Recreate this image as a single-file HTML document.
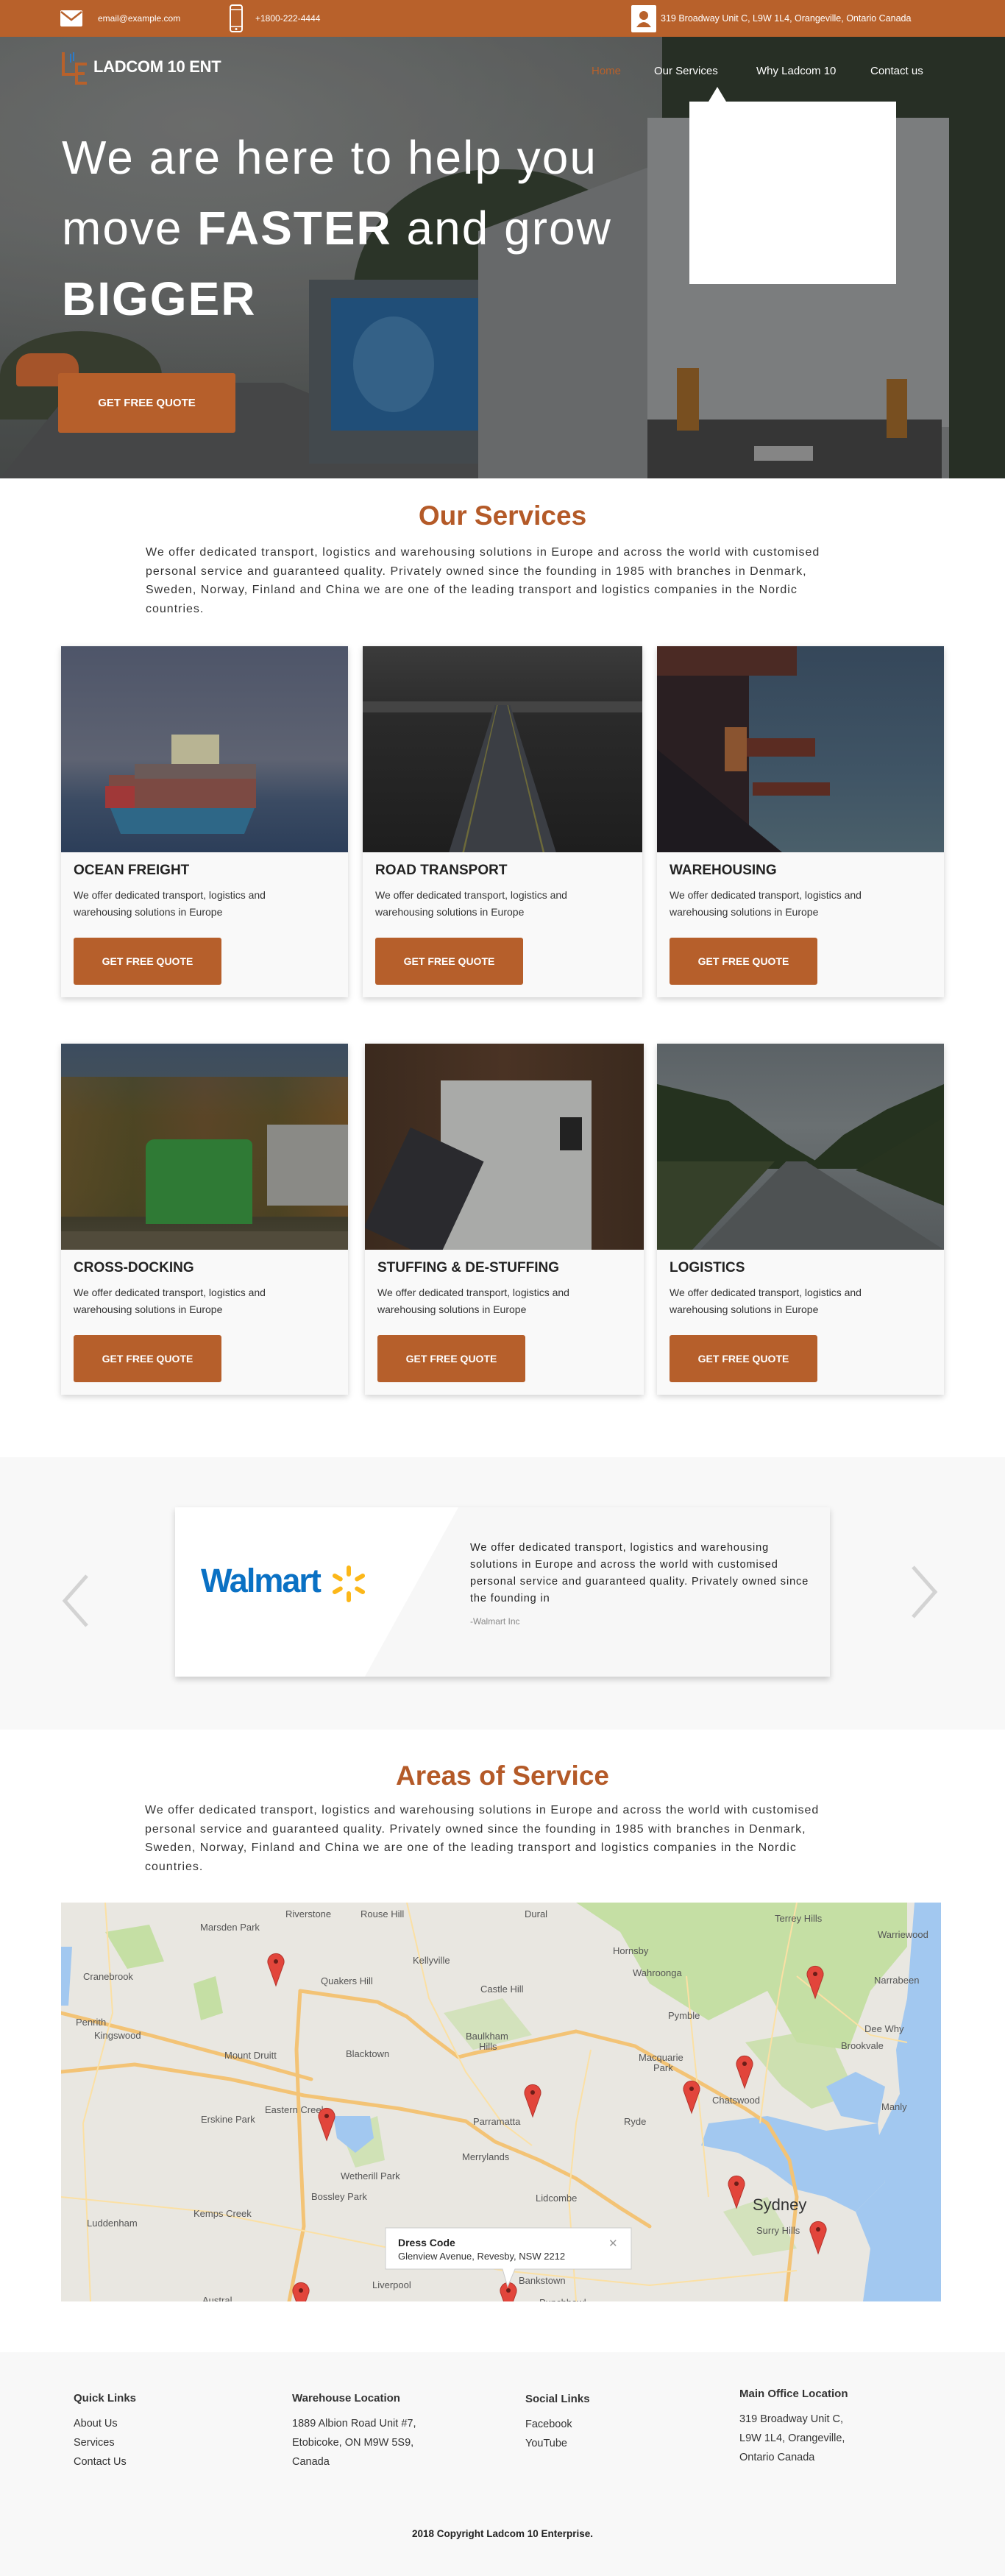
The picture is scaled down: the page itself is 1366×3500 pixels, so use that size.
<!DOCTYPE html>
<html><head><meta charset="utf-8">
<style>
*{margin:0;padding:0;box-sizing:border-box}
body{width:1366px;height:3500px;position:relative;background:#fff;font-family:"Liberation Sans",sans-serif;color:#333;overflow:hidden}
.a{position:absolute}
.top{left:0;top:0;width:1366px;height:50px;background:#b8612b;color:#fff;font-size:12px}
.btn{position:absolute;background:#b65f2b;color:#fff;font-weight:bold;font-size:14px;text-align:center;border-radius:3px}
.card{position:absolute;background:#f9f9f9;box-shadow:0 3px 8px rgba(0,0,0,.18);overflow:hidden}
.card .img{position:absolute;left:0;top:0;width:100%;height:280px;overflow:hidden}
.card h3{position:absolute;left:17px;top:294px;font-size:19px;font-weight:bold;color:#222}
.card p{position:absolute;left:17px;top:327px;font-size:14px;line-height:23px;color:#333;width:340px}
.card .btn{left:17px;top:396px;width:201px;height:64px;line-height:64px}
.h2{position:absolute;left:0;width:1366px;text-align:center;color:#b45a28;font-weight:bold;font-size:37px}
.para{position:absolute;left:198px;width:1100px;font-size:16px;line-height:25.7px;color:#333;white-space:nowrap;letter-spacing:1px}
.ft h4{font-size:15px;font-weight:bold;color:#333;margin-bottom:8px}
.ft div{font-size:14.5px;line-height:26px;color:#333}
</style></head><body>

<div class="a top">
  <svg class="a" style="left:82px;top:14px" width="30" height="22" viewBox="0 0 30 22"><rect width="30" height="22" rx="2" fill="#fff"/><path d="M1 2 L15 13 L29 2" stroke="#b8612b" stroke-width="2.5" fill="none"/></svg>
  <div class="a" style="left:133px;top:18px">email@example.com</div>
  <svg class="a" style="left:311px;top:6px" width="20" height="38" viewBox="0 0 20 38"><rect x="2" y="1" width="16" height="36" rx="3" fill="none" stroke="#fff" stroke-width="2"/><line x1="3" y1="7" x2="17" y2="7" stroke="#fff" stroke-width="1.5"/><line x1="3" y1="30" x2="17" y2="30" stroke="#fff" stroke-width="1.5"/><circle cx="10" cy="33.5" r="1.5" fill="#fff"/></svg>
  <div class="a" style="left:347px;top:18px">+1800-222-4444</div>
  <svg class="a" style="left:857px;top:7px" width="36" height="37" viewBox="0 0 36 37"><rect x="1" y="0" width="34" height="37" rx="2" fill="#fff"/><circle cx="18" cy="14" r="6" fill="#b8612b"/><path d="M8 30 Q18 16 28 30Z" fill="#b8612b"/></svg>
  <div class="a" style="left:898px;top:18px;font-size:12.5px">319 Broadway Unit C, L9W 1L4, Orangeville, Ontario Canada</div>
</div>

<div class="a" style="left:0;top:50px;width:1366px;height:600px;overflow:hidden;background:linear-gradient(180deg,#5a5e5d 0%,#646766 40%,#4d5150 100%)">
  <div class="a" style="left:0;top:0;width:1366px;height:600px;background:radial-gradient(ellipse at 20% 20%,#7a7c7b 0%,rgba(100,100,100,0) 60%)"></div>
  <div class="a" style="left:480px;top:180px;width:420px;height:380px;background:#2f3a2c;border-radius:45% 50% 20% 20%"></div>
  <div class="a" style="left:900px;top:0;width:466px;height:600px;background:#2b3428"></div>
  <div class="a" style="left:0;top:400px;width:220px;height:120px;background:#3c4433;border-radius:50% 50% 0 0"></div>
  <div class="a" style="left:0;top:470px;width:700px;height:130px;background:#4e4f50;clip-path:polygon(15% 0,55% 0,100% 100%,0 100%)"></div>
  <div class="a" style="left:420px;top:330px;width:240px;height:250px;background:#4c5358"></div>
  <div class="a" style="left:450px;top:355px;width:200px;height:180px;background:#23598a"></div>
  <div class="a" style="left:480px;top:380px;width:110px;height:130px;background:#3a6f9c;border-radius:50%"></div>
  <div class="a" style="left:650px;top:120px;width:640px;height:480px;background:#76787a;clip-path:polygon(0 30%,50% 5%,100% 12%,100% 100%,0 100%)"></div>
  <div class="a" style="left:880px;top:110px;width:410px;height:420px;background:#8e9091"></div>
  <div class="a" style="left:880px;top:520px;width:400px;height:80px;background:#3c3c3c"></div>
  <div class="a" style="left:920px;top:450px;width:30px;height:85px;background:#8a5a23"></div>
  <div class="a" style="left:1205px;top:465px;width:28px;height:80px;background:#8a5a23"></div>
  <div class="a" style="left:1025px;top:556px;width:80px;height:20px;background:#999"></div>
  <div class="a" style="left:0;top:0;width:1366px;height:600px;background:rgba(20,20,20,.15)"></div>
  <div class="a" style="left:22px;top:430px;width:85px;height:45px;background:#a5542a;border-radius:20px 20px 4px 4px"></div>
</div>

<svg class="a" style="left:82px;top:67px" width="42" height="50" viewBox="0 0 42 50"><path d="M4 4 V34 H20" stroke="#b8612b" stroke-width="4" fill="none"/><path d="M36 20 H22 V46 H36 M22 33 H33" stroke="#b8612b" stroke-width="4" fill="none"/><path d="M14 6 V18 M18 4 V16" stroke="#2c7bc9" stroke-width="2"/></svg>
<div class="a" style="left:127px;top:78px;color:#fff;font-weight:bold;font-size:22px;letter-spacing:-0.3px">LADCOM 10 ENT</div>
<div class="a" style="left:804px;top:88px;color:#b8612b;font-size:15px">Home</div>
<div class="a" style="left:889px;top:88px;color:#fff;font-size:15px">Our Services</div>
<div class="a" style="left:1028px;top:88px;color:#fff;font-size:15px">Why Ladcom 10</div>
<div class="a" style="left:1183px;top:88px;color:#fff;font-size:15px">Contact us</div>
<div class="a" style="left:963px;top:118px;width:0;height:0;border-left:12px solid transparent;border-right:12px solid transparent;border-bottom:20px solid #fff"></div>
<div class="a" style="left:937px;top:138px;width:281px;height:248px;background:#fff"></div>

<div class="a" style="left:84px;top:166px;color:#fff;font-size:64px;line-height:96px;white-space:nowrap;letter-spacing:2px">We are here to help you<br>move <b>FASTER</b> and grow<br><b>BIGGER</b></div>
<div class="btn" style="left:79px;top:507px;width:241px;height:81px;line-height:81px;font-size:15px">GET FREE QUOTE</div>

<div class="h2" style="top:680px">Our Services</div>
<div class="para" style="top:738px">We offer dedicated transport, logistics and warehousing solutions in Europe and across the world with customised<br>personal service and guaranteed quality. Privately owned since the founding in 1985 with branches in Denmark,<br>Sweden, Norway, Finland and China we are one of the leading transport and logistics companies in the Nordic<br>countries.</div>

<div class="card" style="left:83px;top:878px;width:390px;height:477px">
  <div class="img" style="background:linear-gradient(180deg,#4e5569 0%,#5e6372 55%,#3b4b63 75%,#2c3e59 100%)">
    <div class="a" style="left:65px;top:215px;width:200px;height:40px;background:#2e6787;clip-path:polygon(0 0,100% 0,92% 100%,8% 100%)"></div>
    <div class="a" style="left:65px;top:175px;width:200px;height:45px;background:#7c4a43"></div>
    <div class="a" style="left:150px;top:120px;width:65px;height:60px;background:#b8b493"></div>
    <div class="a" style="left:60px;top:190px;width:40px;height:30px;background:#a03838"></div>
    <div class="a" style="left:100px;top:160px;width:165px;height:20px;background:#6b5a58"></div>
  </div>
  <h3>OCEAN FREIGHT</h3><p>We offer dedicated transport, logistics and warehousing solutions in Europe</p><div class="btn">GET FREE QUOTE</div>
</div>
<div class="card" style="left:493px;top:878px;width:380px;height:477px">
  <div class="img" style="background:linear-gradient(180deg,#3b3b3b 0%,#2a2a2a 35%,#1e1e1e 100%)">
    <div class="a" style="left:0;top:75px;width:380px;height:15px;background:#444"></div>
    <div class="a" style="left:60px;top:80px;width:260px;height:200px;background:#3b3e44;clip-path:polygon(46% 0,54% 0,78% 100%,22% 100%)"></div>
    <div class="a" style="left:60px;top:80px;width:260px;height:200px;background:#6d6a3a;clip-path:polygon(47% 0,47.5% 0,30% 100%,29% 100%)"></div>
    <div class="a" style="left:60px;top:80px;width:260px;height:200px;background:#6d6a3a;clip-path:polygon(52.5% 0,53% 0,72% 100%,71% 100%)"></div>
  </div>
  <h3>ROAD TRANSPORT</h3><p>We offer dedicated transport, logistics and warehousing solutions in Europe</p><div class="btn">GET FREE QUOTE</div>
</div>
<div class="card" style="left:893px;top:878px;width:390px;height:477px">
  <div class="img" style="background:linear-gradient(180deg,#35475a 0%,#3f5465 60%,#4a5f6a 100%)">
    <div class="a" style="left:0;top:0;width:125px;height:280px;background:#2a1f22"></div>
    <div class="a" style="left:0;top:140px;width:170px;height:140px;background:#1e1a1f;clip-path:polygon(0 0,100% 100%,0 100%)"></div>
    <div class="a" style="left:0;top:0;width:190px;height:40px;background:#4b2a24"></div>
    <div class="a" style="left:120px;top:125px;width:95px;height:25px;background:#5b2c22"></div>
    <div class="a" style="left:130px;top:185px;width:105px;height:18px;background:#5b2c22"></div>
    <div class="a" style="left:92px;top:110px;width:30px;height:60px;background:#8a5430"></div>
  </div>
  <h3>WAREHOUSING</h3><p>We offer dedicated transport, logistics and warehousing solutions in Europe</p><div class="btn">GET FREE QUOTE</div>
</div>

<div class="card" style="left:83px;top:1418px;width:390px;height:477px">
  <div class="img" style="background:linear-gradient(180deg,#3c4c5f 0%,#43505a 20%,#5a4a2c 35%,#4d4626 70%,#3d3a2a 85%,#4a4536 100%)">
    <div class="a" style="left:0;top:45px;width:390px;height:190px;background:linear-gradient(90deg,#5b4a26,#4a4421,#5b4426,#4e4421,#6a4a22);opacity:.8"></div>
    <div class="a" style="left:115px;top:130px;width:145px;height:115px;background:#2f7a35;border-radius:12px 8px 0 0"></div>
    <div class="a" style="left:280px;top:110px;width:110px;height:110px;background:#8a8a86"></div>
    <div class="a" style="left:0;top:255px;width:390px;height:25px;background:#514b3b"></div>
  </div>
  <h3>CROSS-DOCKING</h3><p>We offer dedicated transport, logistics and warehousing solutions in Europe</p><div class="btn">GET FREE QUOTE</div>
</div>
<div class="card" style="left:496px;top:1418px;width:379px;height:477px">
  <div class="img" style="background:linear-gradient(90deg,#3b2a1e,#4a3324,#3b2a1e)">
    <div class="a" style="left:103px;top:50px;width:205px;height:230px;background:#a9aaa8"></div>
    <div class="a" style="left:25px;top:130px;width:110px;height:150px;background:#2a2a2e;transform:rotate(25deg)"></div>
    <div class="a" style="left:265px;top:100px;width:30px;height:45px;background:#222"></div>
  </div>
  <h3>STUFFING &amp; DE-STUFFING</h3><p>We offer dedicated transport, logistics and warehousing solutions in Europe</p><div class="btn">GET FREE QUOTE</div>
</div>
<div class="card" style="left:893px;top:1418px;width:390px;height:477px">
  <div class="img" style="background:linear-gradient(180deg,#5b6266 0%,#6a7072 40%,#54595b 100%)">
    <div class="a" style="left:0;top:55px;width:390px;height:115px;background:#25321f;clip-path:polygon(0 0,25% 20%,45% 70%,55% 90%,65% 60%,80% 30%,100% 0,100% 100%,0 100%)"></div>
    <div class="a" style="left:0;top:160px;width:390px;height:120px;background:#4e5253;clip-path:polygon(45% 0,52% 0,100% 100%,15% 100%)"></div>
    <div class="a" style="left:0;top:160px;width:160px;height:120px;background:#354029;clip-path:polygon(0 0,100% 0,30% 100%,0 100%)"></div>
    <div class="a" style="left:270px;top:100px;width:120px;height:120px;background:#27331f;clip-path:polygon(100% 0,100% 100%,0 60%)"></div>
  </div>
  <h3>LOGISTICS</h3><p>We offer dedicated transport, logistics and warehousing solutions in Europe</p><div class="btn">GET FREE QUOTE</div>
</div>

<div class="a" style="left:0;top:1980px;width:1366px;height:370px;background:#f8f8f8"></div>
<svg class="a" style="left:82px;top:2138px" width="40" height="74" viewBox="0 0 40 74"><path d="M36 3 L6 37 L36 71" stroke="#d3d3d3" stroke-width="5" fill="none"/></svg>
<svg class="a" style="left:1237px;top:2126px" width="40" height="74" viewBox="0 0 40 74"><path d="M4 3 L34 37 L4 71" stroke="#d3d3d3" stroke-width="5" fill="none"/></svg>
<div class="a" style="left:238px;top:2048px;width:890px;height:230px;background:#f7f7f7;box-shadow:0 4px 8px rgba(0,0,0,.18);overflow:hidden">
  <div class="a" style="left:0;top:0;width:385px;height:230px;background:#fff;clip-path:polygon(0 0,100% 0,67% 100%,0 100%)"></div>
  <div class="a" style="left:35px;top:74px;font-size:45px;font-weight:bold;color:#0a71c4;letter-spacing:-2px">Walmart</div>
  <svg class="a" style="left:210px;top:78px" width="52" height="52" viewBox="-26 -26 52 52"><g fill="#fcb719"><rect x="-3" y="-25" width="6" height="15" rx="3"/><rect x="-3" y="-25" width="6" height="15" rx="3" transform="rotate(60)"/><rect x="-3" y="-25" width="6" height="15" rx="3" transform="rotate(120)"/><rect x="-3" y="-25" width="6" height="15" rx="3" transform="rotate(180)"/><rect x="-3" y="-25" width="6" height="15" rx="3" transform="rotate(240)"/><rect x="-3" y="-25" width="6" height="15" rx="3" transform="rotate(300)"/></g></svg>
  <div class="a" style="left:401px;top:44px;font-size:14.5px;line-height:23px;color:#222;white-space:nowrap;letter-spacing:0.9px">We offer dedicated transport, logistics and warehousing<br>solutions in Europe and across the world with customised<br>personal service and guaranteed quality. Privately owned since<br>the founding in</div>
  <div class="a" style="left:401px;top:148px;font-size:12px;color:#888">-Walmart Inc</div>
</div>

<div class="h2" style="top:2392px">Areas of Service</div>
<div class="para" style="top:2447px;left:197px">We offer dedicated transport, logistics and warehousing solutions in Europe and across the world with customised<br>personal service and guaranteed quality. Privately owned since the founding in 1985 with branches in Denmark,<br>Sweden, Norway, Finland and China we are one of the leading transport and logistics companies in the Nordic<br>countries.</div>

<svg class="a" style="left:83px;top:2585px" width="1196" height="542" viewBox="0 0 1196 542" font-family="Liberation Sans, sans-serif" font-size="12" fill="#555">
<rect width="1196" height="542" fill="#e9e7e1"/>
<g fill="#c5dfa4">
<path d="M700 0 H1150 V60 L1100 120 L1070 200 L1000 190 L960 120 L880 160 L800 110 L760 40 Z"/>
<path d="M930 190 L1040 170 L1080 260 L1020 280 L980 250 Z" opacity=".8"/>
<path d="M60 40 L120 30 L140 80 L90 90 Z"/><path d="M180 110 L210 100 L220 150 L190 160 Z"/>
<path d="M520 150 L600 130 L640 180 L560 200 Z" opacity=".6"/>
<path d="M900 420 L960 400 L1000 470 L940 480 Z" opacity=".6"/>
<path d="M380 310 L430 290 L440 350 L400 360 Z" opacity=".7"/>
</g>
<path d="M1160 0 H1196 V542 H1090 L1100 470 L1080 420 L1120 380 L1110 320 L1140 260 L1135 200 L1150 130 Z" fill="#a2c8f0"/>
<path d="M880 300 L960 290 L1040 310 L1110 300 L1120 380 L1080 420 L1040 400 L1000 390 L960 360 L920 340 L870 330 Z" fill="#a2c8f0"/>
<path d="M1040 250 L1080 230 L1120 250 L1110 300 L1060 290 Z" fill="#a2c8f0"/>
<path d="M370 290 L420 290 L425 320 L400 340 L375 320 Z" fill="#a2c8f0"/>
<path d="M0 60 L15 60 L10 140 L0 140Z" fill="#a2c8f0"/>
<g fill="none" stroke="#f3c375" stroke-width="5" stroke-linecap="round" stroke-linejoin="round">
<path d="M0 230 L100 220 L230 240 L330 262 L460 280 L550 297 L590 325 L650 350 L700 375 L760 415 L800 440"/>
<path d="M325 120 L320 200 L325 330 L330 440 L310 542"/>
<path d="M325 120 L360 125 L430 135 L470 155 L500 180 L540 210 L560 205 L630 190 L700 175 L780 195 L820 218 L860 240 L930 280 L960 300 L990 350 L1000 400 L985 542"/>
<path d="M0 150 L120 180 L250 215 L340 240"/>
</g>
<g fill="none" stroke="#fbe0a4" stroke-width="2">
<path d="M470 0 L500 130 L550 230 L600 300 L640 330"/><path d="M720 200 L700 300 L690 400 L700 542"/><path d="M850 100 L860 200 L870 300 L880 400"/><path d="M1000 0 L980 100 L960 220 L950 300"/><path d="M60 0 L70 150 L30 300 L40 542"/><path d="M0 400 L200 420 L400 460 L600 500 L800 520 L1000 500"/><path d="M1000 100 L1100 180 L1150 190"/>
</g>
<g font-size="13">
<text x="305" y="20">Riverstone</text><text x="407" y="20">Rouse Hill</text><text x="630" y="20">Dural</text><text x="189" y="38">Marsden Park</text><text x="970" y="26">Terrey Hills</text><text x="1110" y="48">Warriewood</text><text x="750" y="70">Hornsby</text><text x="30" y="105">Cranebrook</text><text x="478" y="83">Kellyville</text><text x="777" y="100">Wahroonga</text><text x="1105" y="110">Narrabeen</text><text x="353" y="111">Quakers Hill</text><text x="570" y="122">Castle Hill</text><text x="825" y="158">Pymble</text><text x="20" y="167">Penrith</text><text x="45" y="185">Kingswood</text><text x="1092" y="176">Dee Why</text><text x="550" y="186">Baulkham</text><text x="568" y="200">Hills</text><text x="1060" y="199">Brookvale</text><text x="387" y="210">Blacktown</text><text x="222" y="212">Mount Druitt</text><text x="785" y="215">Macquarie</text><text x="805" y="229">Park</text><text x="885" y="273">Chatswood</text><text x="1115" y="282">Manly</text><text x="277" y="286">Eastern Creek</text><text x="190" y="299">Erskine Park</text><text x="560" y="302">Parramatta</text><text x="765" y="302">Ryde</text><text x="545" y="350">Merrylands</text><text x="380" y="376">Wetherill Park</text><text x="340" y="404">Bossley Park</text><text x="645" y="406">Lidcombe</text><text x="180" y="427">Kemps Creek</text><text x="35" y="440">Luddenham</text><text x="945" y="450">Surry Hills</text><text x="423" y="524">Liverpool</text><text x="622" y="518">Bankstown</text><text x="192" y="545">Austral</text><text x="650" y="548">Punchbowl</text>
<text x="940" y="418" font-size="22" fill="#333">Sydney</text>
</g>
<g fill="#e2453b" stroke="#b3342c" stroke-width="1">
<path d="M292 113 L282 85 A11 11 0 1 1 302 85 Z"/><path d="M1025 130 L1015 102 A11 11 0 1 1 1035 102 Z"/><path d="M361 323 L351 295 A11 11 0 1 1 371 295 Z"/><path d="M641 291 L631 263 A11 11 0 1 1 651 263 Z"/><path d="M929 252 L919 224 A11 11 0 1 1 939 224 Z"/><path d="M857 286 L847 258 A11 11 0 1 1 867 258 Z"/><path d="M918 415 L908 387 A11 11 0 1 1 928 387 Z"/><path d="M1029 477 L1019 449 A11 11 0 1 1 1039 449 Z"/><path d="M326 560 L316 532 A11 11 0 1 1 336 532 Z"/><path d="M608 560 L598 532 A11 11 0 1 1 618 532 Z"/>
</g>
<g fill="#6b1d18"><circle cx="292" cy="80" r="3"/><circle cx="1025" cy="97" r="3"/><circle cx="361" cy="290" r="3"/><circle cx="641" cy="258" r="3"/><circle cx="929" cy="219" r="3"/><circle cx="857" cy="253" r="3"/><circle cx="918" cy="382" r="3"/><circle cx="1029" cy="444" r="3"/><circle cx="326" cy="527" r="3"/><circle cx="608" cy="527" r="3"/></g>
<path d="M441 442 H775 V498 H617 L607 522 L600 498 H441 Z" fill="#fff" stroke="#ccc"/>
<text x="458" y="467" font-size="14" font-weight="bold" fill="#222">Dress Code</text>
<text x="458" y="485" font-size="13" fill="#333">Glenview Avenue, Revesby, NSW 2212</text>
<text x="744" y="468" font-size="15" fill="#999">✕</text>
</svg>

<div class="a ft" style="left:0;top:3196px;width:1366px;height:304px;background:#f8f8f8">
  <div class="a" style="left:100px;top:50px"><h4>Quick Links</h4><div>About Us<br>Services<br>Contact Us</div></div>
  <div class="a" style="left:397px;top:50px"><h4>Warehouse Location</h4><div>1889 Albion Road Unit #7,<br>Etobicoke, ON M9W 5S9,<br>Canada</div></div>
  <div class="a" style="left:714px;top:51px"><h4>Social Links</h4><div>Facebook<br>YouTube</div></div>
  <div class="a" style="left:1005px;top:44px"><h4>Main Office Location</h4><div>319 Broadway Unit C,<br>L9W 1L4, Orangeville,<br>Ontario Canada</div></div>
  <div class="a" style="left:0;top:234px;width:1366px;text-align:center;font-size:13.5px;font-weight:bold;color:#222">2018 Copyright Ladcom 10 Enterprise.</div>
</div>
</body></html>
